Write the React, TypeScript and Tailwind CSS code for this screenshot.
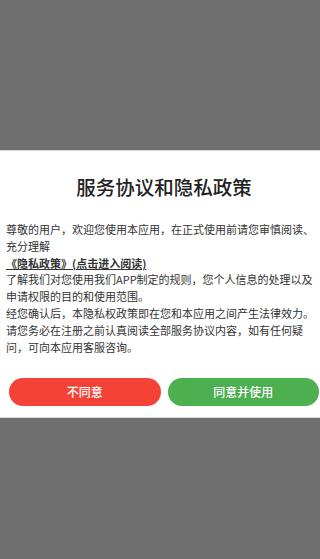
export default function App() {
  return (
    <div
      className="flex h-[559px] w-[320px] flex-col bg-[#6f6f6f]"
      style={{ fontFamily: '"Noto Sans CJK SC", "Noto Sans", sans-serif' }}
    >
      <div className="mt-[150px] flex flex-col border-y border-[#d9d9d9] bg-white">
        <h1 className="pl-[9px] pr-[1px] pt-[22px] text-center text-[19.5px] font-medium leading-[28px] text-[#222]">
          服务协议和隐私政策
        </h1>
        <div className="mt-[20px] px-[6px] text-[11px] leading-[16.8px] text-[#333]">
          <p>尊敬的用户，欢迎您使用本应用，在正式使用前请您审慎阅读、充分理解</p>
          <p className="font-bold underline">《隐私政策》(点击进入阅读)</p>
          <p>了解我们对您使用我们APP制定的规则，您个人信息的处理以及申请权限的目的和使用范围。</p>
          <p>经您确认后，本隐私权政策即在您和本应用之间产生法律效力。请您务必在注册之前认真阅读全部服务协议内容，如有任何疑问，可向本应用客服咨询。</p>
        </div>
        <div className="mt-[23px] mb-[11px] flex gap-[7px] pl-[9px] pr-[1px]">
          <button className="h-[28px] flex-1 rounded-full bg-[#f44336] text-[12px] font-medium text-white">
            不同意
          </button>
          <button className="h-[28px] flex-1 rounded-full bg-[#4caf50] text-[12px] font-medium text-white">
            同意并使用
          </button>
        </div>
      </div>
    </div>
  );
}
